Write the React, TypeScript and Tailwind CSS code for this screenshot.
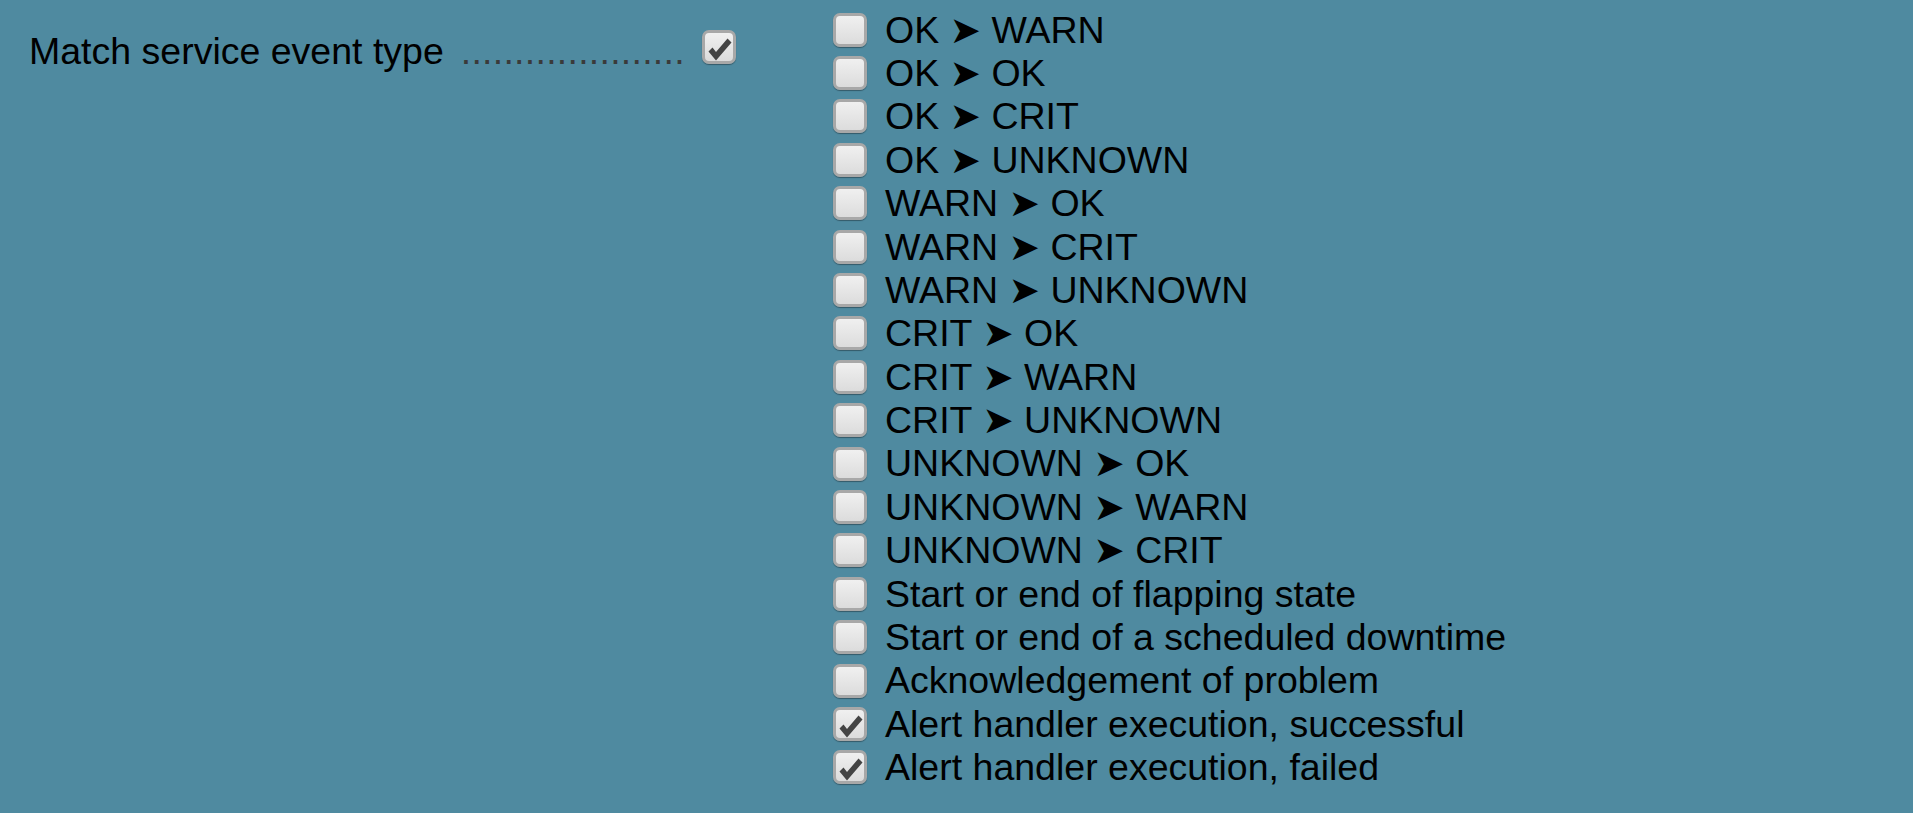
import React from 'react';

const events: { label: string; checked: boolean }[] = [
  { label: 'OK ➤ WARN', checked: false },
  { label: 'OK ➤ OK', checked: false },
  { label: 'OK ➤ CRIT', checked: false },
  { label: 'OK ➤ UNKNOWN', checked: false },
  { label: 'WARN ➤ OK', checked: false },
  { label: 'WARN ➤ CRIT', checked: false },
  { label: 'WARN ➤ UNKNOWN', checked: false },
  { label: 'CRIT ➤ OK', checked: false },
  { label: 'CRIT ➤ WARN', checked: false },
  { label: 'CRIT ➤ UNKNOWN', checked: false },
  { label: 'UNKNOWN ➤ OK', checked: false },
  { label: 'UNKNOWN ➤ WARN', checked: false },
  { label: 'UNKNOWN ➤ CRIT', checked: false },
  { label: 'Start or end of flapping state', checked: false },
  { label: 'Start or end of a scheduled downtime', checked: false },
  { label: 'Acknowledgement of problem', checked: false },
  { label: 'Alert handler execution, successful', checked: true },
  { label: 'Alert handler execution, failed', checked: true },
];

function Checkbox({ checked }: { checked: boolean }) {
  return (
    <span className="flex h-[34px] w-[34px] shrink-0 items-center justify-center rounded-[7px] border-[3px] border-[#a8a8a8] bg-gradient-to-b from-[#f0f0f0] to-[#dcdcdc] shadow-[0_1px_1px_rgba(0,0,0,0.35)]">
      {checked && (
        <svg viewBox="0 0 28 28" className="h-[28px] w-[28px]">
          {/* heavy check mark */}
          <polygon points="3.5,18.5 7.5,14.5 11,19 22.5,5.5 26.5,9.5 11,27.5" fill="#444" />
        </svg>
      )}
    </span>
  );
}

export default function App() {
  return (
    <div
      className="flex h-[813px] w-full bg-[#4f8aa0] text-[37.5px] text-black"
      style={{ fontFamily: '"Liberation Sans", "DejaVu Sans", Arial, sans-serif' }}
    >
      {/* Legend */}
      <div className="w-[833px] shrink-0 pl-[29px] pt-[25px]">
        <div className="flex h-[43.4px] items-center">
          <span className="whitespace-nowrap pt-[9px]">Match service event type</span>
          <span className="ml-[17px] whitespace-nowrap pt-[9px] tracking-[0.25px] text-[#3a3a3a]">
            .....................
          </span>
          <span className="ml-[17px]">
            <Checkbox checked />
          </span>
        </div>
      </div>

      {/* Event types */}
      <div className="flex flex-col pt-[8px]">
        {events.map((ev) => (
          <label key={ev.label} className="flex h-[43.4px] items-center gap-[18px] whitespace-nowrap">
            <Checkbox checked={ev.checked} />
            <span>{ev.label}</span>
          </label>
        ))}
      </div>
    </div>
  );
}
